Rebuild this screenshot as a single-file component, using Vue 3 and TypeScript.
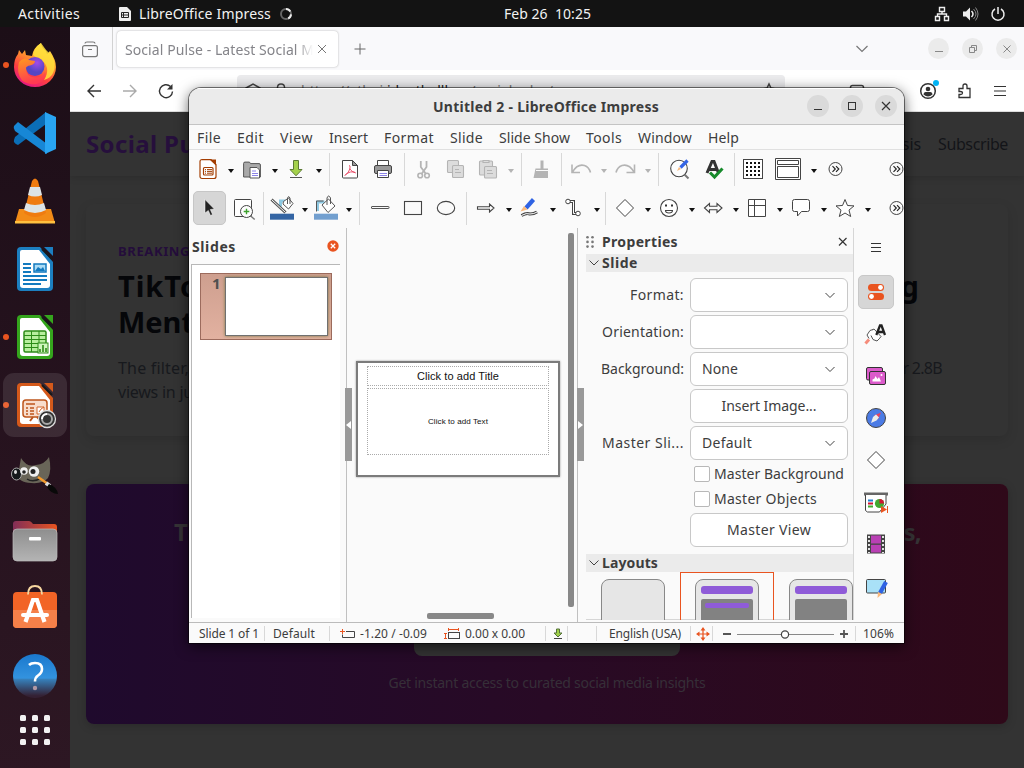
<script setup lang="ts">
import { nextTick } from 'vue'

// Spreads the letters of a label so that it fills the given width.
const vFit = {
  mounted(el: HTMLElement, binding: { value: number }) {
    nextTick(() => {
      el.style.letterSpacing = '0px'
      const range = document.createRange()
      range.selectNodeContents(el)
      const natural = range.getBoundingClientRect().width
      const count = (el.textContent || '').trim().length
      if (count > 1) el.style.letterSpacing = `${((binding.value - natural) / count).toFixed(3)}px`
    })
  },
}

const S = 'fill="none" stroke="#444" stroke-width="1.1"'
const G = 'fill="#dcdcdc" stroke="#b4b4b4" stroke-width="1.1"'

const icons: Record<string, string> = {
  impress: '<path d="M6 2.600h9l5 5v11.900a2 2 0 0 1-2 2H6a2 2 0 0 1-2-2v-15a2 2 0 0 1 2-2z" fill="#fff" stroke="#a33e03" stroke-width="1.200"/><path d="M13.500 2.600h6.500v6z" fill="#a33e03"/><rect x="7.500" y="10.500" width="9.500" height="7.500" rx="1" fill="none" stroke="#a33e03" stroke-width="1.200"/><path d="M9 12.600h1M11 12.600h5M9 14.400h1M11 14.400h5M9 16.200h1M11 16.200h5" stroke="#a33e03"/>',
  open: '<path d="M3.600 20V6.500q0-1.400 1.400-1.400h4.500l1 1.500h8.500q1.400 0 1.400 1.400V20z" fill="#a9a9a9" stroke="#555"/><path d="M10 10.500h7l2.500 2.500v8h-9.500z" fill="#fff" stroke="#555"/><path d="M12 14h4M12 16.500h6M12 18.500h6" stroke="#8b83e6"/>',
  save: '<path d="M9.500 3.500h5v9h3.500L12 18.800 6 12.500h3.500z" fill="#a4d14b" stroke="#5c7a35"/><path d="M6 20.500h12" stroke="#555"/>',
  pdf: '<path d="M4.500 3.500h10l5 5v11.500a1 1 0 0 1-1 1h-13a1 1 0 0 1-1-1z" fill="#fff" stroke="#444"/><path d="M14.500 3.500v5h5z" fill="#999" stroke="#444"/><path d="M11 8.500q1.500-.5 1 3-1 4-5 7 1-2.500 5.500-3.500 4-.8 5 .8-2.500.5-6-4.300" fill="none" stroke="#e8425f" stroke-width=".9"/>',
  print: '<path d="M6.500 9V3.500h11V9" fill="#fff" stroke="#444"/><rect x="3.500" y="8.500" width="17" height="8" rx="1.500" fill="#999" stroke="#444"/><path d="M6.500 13.500h11v7h-11z" fill="#fff" stroke="#444"/><path d="M8.500 16.500h7.500M8.500 18.500h7.500" stroke="#8b83e6"/>',
  cut: '<path d="M8.800 4v6l5.200 7M14.500 4v6l-5 7" stroke="#b4b4b4" stroke-width="1.800" fill="none"/><circle cx="8.200" cy="18.500" r="2.300" fill="none" stroke="#b4b4b4" stroke-width="1.600"/><circle cx="15" cy="18.500" r="2.300" fill="none" stroke="#b4b4b4" stroke-width="1.600"/>',
  copy: `<rect x="3.500" y="3.500" width="11" height="12" rx="1" ${G}/><rect x="8.500" y="8.500" width="11" height="12" rx="1" ${G}/><path d="M11 12.500h4M11 15.500h6" stroke="#b4b4b4"/>`,
  paste: `<rect x="3.500" y="4" width="13" height="14" rx="1" ${G}/><path d="M7 3.500h6v2h-6z" ${G}/><rect x="8.500" y="9.500" width="12" height="11.500" rx="1" ${G}/><path d="M11 13.500h5M11 16.500h6" stroke="#b4b4b4"/>`,
  brush: '<path d="M10.500 3.500h3v8h4.500v9.500h-14.500l2-9.500h5z" fill="#b4b4b4"/><path d="M6 13.500h12" stroke="#fafafa"/>',
  undo: '<path d="M3 7.500v8h8M3.500 15q5-8.500 12-6.500 4.500 1.500 6 7" fill="none" stroke="#b4b4b4" stroke-width="1.600"/>',
  redo: '<path d="M21.500 7.500v8h-8M21 15q-5-8.500-12-6.500-4.500 1.500-6 7" fill="none" stroke="#b4b4b4" stroke-width="1.600"/>',
  find: '<circle cx="12" cy="11.500" r="8.300" fill="#fdfdfd" stroke="#444" stroke-width="1.100"/><path d="M17.500 17.500l4 4" stroke="#777" stroke-width="2"/><path d="M13.500 10.500L20.500 3.500" stroke="#3465e5" stroke-width="3.200"/><path d="M10 14l2-4 2 2z" fill="#f9b97d"/>',
  spell: '<path d="M6 16L11 4.500h2L17.500 16M8.500 12.500h7" fill="none" stroke="#333" stroke-width="3"/><path d="M9 15.500l4.500 4.500 8-8.500" fill="none" stroke="#168a2b" stroke-width="3"/>',
  grid: `<rect x="2.500" y="2.500" width="19" height="19" fill="#fff" stroke="#444"/><path d="M5 6h15M5 10h15M5 14h15M5 18h15" stroke="#111" stroke-width="2" stroke-dasharray="2 2"/>`,
  display: `<path d="M-.5 1.500h25v21h-25zM1.500 3.500h21v4h-21zM1.500 9.500h21v11h-21z" fill="#fff" stroke="#444"/>`,
  more: '<circle cx="12.500" cy="12" r="6.500" fill="none" stroke="#444"/><path d="M9.500 9.200l2.800 2.800-2.800 2.800M13 9.200l2.800 2.800-2.800 2.800" fill="none" stroke="#222" stroke-width="1.150"/>',
  select: '<path d="M8 3.500V17l3.300-2.500 2.200 5 2-1-2.200-5 4-.5z" fill="#222" stroke="#fff" stroke-width=".5"/>',
  zoom: '<rect x="3.500" y="3.500" width="17" height="17" rx="1" fill="#fff" stroke="#444"/><circle cx="15.500" cy="15.500" r="6" fill="#fdfdfd" stroke="#444"/><path d="M15.500 12.700v5.600M12.700 15.500h5.600" stroke="#3da02d" stroke-width="1.400"/><path d="M19.700 20l4 3.500" stroke="#777" stroke-width="1.500"/>',
  lineColor: '<path d="M10.500 10.500V5h5" stroke="#8fc9e2" stroke-width="3" fill="none"/><path d="M13.500 5.500l5-3.500 4.500 5.500-4.500 5.500-5.500-5z" fill="#fff" stroke="#555"/><path d="M1.500 3.500l14 13" stroke="#555" stroke-width="3"/><path d="M1.500 3.500l14 13" stroke="#fff"/><path d="M17.500 8V2q1-3 2.500 0v6" stroke="#555" fill="none"/><rect x="0" y="17.700" width="24" height="6" fill="#3465a4"/>',
  fillColor: '<path d="M3.500 15V6h7" stroke="#8fc9e2" stroke-width="3" fill="none"/><path d="M2.500 15.500v-10.500h7" stroke="#555" fill="none"/><path d="M8 9l6.500-6 6.500 7-7 6.500z" fill="#fff" stroke="#555"/><path d="M13 9V2q1.500-4 3.500 0v6" stroke="#555" fill="none"/><rect x="0" y="17.700" width="24" height="6" fill="#729fcf"/>',
  line: `<rect x="3.500" y="10.500" width="17.500" height="2" rx=".5" fill="none" stroke="#555"/>`,
  rect: `<rect x="3.500" y="5.500" width="17" height="13" ${S}/>`,
  ellipse: `<ellipse cx="12" cy="12" rx="8.700" ry="6.600" ${S}/>`,
  arrow: `<path d="M3.500 10.700h12v-2.700l4.500 4-4.500 4v-2.700h-12z" ${S}/>`,
  pencil: '<path d="M8 12L15.500 3.500" stroke="#2f63e3" stroke-width="4.200"/><path d="M2.500 15.500l3.500-5.500 3.500 3.500z" fill="#f9b97d"/><path d="M3.500 19.500q5-3 8.500-1.500 4 0 7-2" fill="none" stroke="#444" stroke-width="3"/><path d="M3.500 19.500q5-3 8.500-1.500 4 0 7-2" fill="none" stroke="#fff"/>',
  connector: '<path d="M7 5.500h4.500v12h5" fill="none" stroke="#444" stroke-width="3"/><path d="M7 5.500h4.500v12h5" fill="none" stroke="#fff"/><circle cx="6" cy="5.500" r="2.300" fill="#fff" stroke="#444"/><circle cx="16" cy="17.500" r="2.300" fill="#fff" stroke="#444"/>',
  diamond: '<path d="M12 3.500l8.500 8.500-8.500 8.500-8.500-8.500z" fill="#fff" stroke="#444"/>',
  smiley: '<circle cx="12" cy="12" r="8.500" fill="#fff" stroke="#444" stroke-width="1.100"/><path d="M8 9.500h2M14 9.500h2" stroke="#333" stroke-width="1.800"/><path d="M8.500 14.500q0 2.500 3.500 2.500t3.500-2.500z" fill="none" stroke="#444" stroke-width="1.100"/>',
  leftRight: `<path d="M3.500 12l5-4.500v2.700h7.500v-2.700l5 4.500-5 4.500v-2.700h-7.500v2.700z" ${S}/>`,
  table: '<path d="M3.500 3.500h17v17h-17zM3.500 9.500h17M9.500 3.500v17" fill="#fff" stroke="#444"/>',
  callout: '<path d="M5.500 3.500h13q2 0 2 2v8q0 2-2 2h-6l-4 4.500v-4.500h-3q-2 0-2-2v-8q0-2 2-2z" fill="#fff" stroke="#444"/>',
  star: '<path d="M12 3.500l2.500 6 6.500.4-5 4.200 1.700 6.400-5.700-3.500-5.700 3.500 1.700-6.400-5-4.200 6.500-.4z" fill="#fff" stroke="#444"/>',
  menu: '<path d="M7 8.500h10M7 12.500h10M7 16.500h10" stroke="#333"/>',
  props: '<rect x="4" y="4" width="16" height="7" rx="3.500" fill="#e95420"/><rect x="4" y="13" width="16" height="7" rx="3.500" fill="#e95420"/><circle cx="16.500" cy="7.500" r="2.400" fill="#fff"/><circle cx="7.500" cy="16.500" r="2.400" fill="#fff"/>',
  styles: '<path d="M1.500 20.500l3.500-4" stroke="#f58c7b" stroke-width="3"/><path d="M5 15.500l-2-3.500 3-4.500 3-1 7 8.500-3 3-4-1.500-2-4" fill="#fff" stroke="#555"/><path d="M8 7l2-1 7 7.500-1.500 2" fill="#fff" stroke="#555"/><path d="M12.300 12L16 2.500h1.500L21 12M14 9h6" fill="none" stroke="#222" stroke-width="2.300"/>',
  gallery: '<rect x="2.500" y="3.500" width="16" height="12.500" rx="1.500" fill="#dc5bcb" stroke="#333"/><rect x="5.500" y="7.500" width="16" height="13" rx="1.500" fill="#dc5bcb" stroke="#333"/><path d="M8.500 17.500v-2l2-1 1-2.500 2 3 1.500-2 2 4.500z" fill="#fff"/><circle cx="17.500" cy="11" r="1" fill="#fff"/>',
  compass: '<circle cx="12" cy="12" r="9.500" fill="#4b7be5" stroke="#444"/><path d="M17 6.500l-7 3 4 4z" fill="#e8425f"/><path d="M7 17l2-6 3-2.500 3 3-2.500 3z" fill="#ececec"/>',
  present: '<path d="M0 3h24" stroke="#666" stroke-width="3"/><path d="M1.500 4v15.500l2 1.500h12l6.500-8V4" fill="#fff" stroke="#444"/><path d="M4 9.500h5" stroke="#1b80d4" stroke-width="2"/><path d="M4 12.500h5" stroke="#d01431" stroke-width="2"/><path d="M4 15.500h5" stroke="#41a82f" stroke-width="2"/><circle cx="15.500" cy="12.500" r="4.600" fill="#41a82f"/><path d="M15.500 12.500v-4.600a4.600 4.600 0 0 1 4.600 4.600z" fill="#d01431"/><path d="M17 15l6 3.500-6 3.500z" fill="#e95420"/><path d="M23.500 15v7" stroke="#e95420"/>',
  film: '<rect x="3" y="2.500" width="18" height="19" fill="#444"/><rect x="7" y="3.500" width="10" height="8" fill="#b940b4"/><rect x="7" y="12.800" width="10" height="7.700" fill="#b940b4"/><path d="M5 4v17M19 4v17" stroke="#fff" stroke-width="1.700" stroke-dasharray="2 2"/>',
  shapes: '<rect x="2.500" y="3.500" width="19" height="13.500" rx="1" fill="#a9e1f7" stroke="#444"/><path d="M22 6L16 17" stroke="#2f63e3" stroke-width="4.200"/><path d="M13.500 22l.5-6 4 2z" fill="#f9b97d"/>',
}

interface Tool { icon?: string; kind?: 'sep' | 'drop'; size: string; off?: boolean }
const t = (icon: string, size = 'n', off = false): Tool => ({ icon, size, off })
const sep = (size = 's10'): Tool => ({ kind: 'sep', size })
const drop = (off = false): Tool => ({ kind: 'drop', size: 'd', off })

const standardBar: Tool[] = [
  t('impress'), drop(), t('open'), drop(), t('save'), drop(), sep(), t('pdf'), t('print', 'w34'), sep('s8'),
  t('cut'), t('copy'), t('paste'), drop(true), sep(), t('brush'), sep('s7'), t('undo'), drop(true),
  t('redo'), drop(true), sep(), t('find'), t('spell', 'w36'), sep('s6'), t('grid'), t('display', 'w38'), drop(), t('more'), t('more', 'end'),
]
const drawBar: Tool[] = [
  t('select', 'pick'), t('zoom', 'w34'), sep('s6'), t('lineColor'), drop(), t('fillColor'), drop(), sep(),
  t('line'), t('rect', 'w33'), t('ellipse', 'w33'), sep('s8'), t('arrow'), drop(), t('pencil'), drop(), t('connector'), drop(), sep('s7'),
  t('diamond'), drop(), t('smiley'), drop(), t('leftRight'), drop(), t('table'), drop(), t('callout'), drop(), t('star'), drop(), t('more', 'end'),
]
const menus: [string, string, number][] = [
  ['File', 'm40', 24], ['Edit', 'm43', 27], ['View', 'm49', 33], ['Insert', 'm55', 39], ['Format', 'm66', 50],
  ['Slide', 'm49', 33], ['Slide Show', 'm87', 71], ['Tools', 'm52', 36], ['Window', 'm70', 54], ['Help', 'm50', 31],
]
const fields: { label: string; lw: number; value: string; vw: number; button?: boolean }[] = [
  { label: 'Format:', lw: 54, value: '', vw: 0 },
  { label: 'Orientation:', lw: 82, value: '', vw: 0 },
  { label: 'Background:', lw: 83, value: 'None', vw: 36 },
  { label: '', lw: 0, value: 'Insert Image...', vw: 95, button: true },
  { label: 'Master Sli...', lw: 82, value: 'Default', vw: 50 },
]
const deck = ['props', 'styles', 'gallery', 'compass', 'diamond', 'present', 'film', 'shapes']
const docs = ['writer', 'calc', 'slides']
</script>

<template>
  <div class="desktop">
    <header class="topbar">
      <span class="activities"><span v-fit="62">Activities</span></span>
      <span class="app">
        <svg width="12" height="14" viewBox="0 0 12 14"><path d="M1 0h7l4 4v9q0 1-1 1H1q-1 0-1-1V1q0-1 1-1z" fill="#eee" /><path d="M2.500 5.500h7v5h-7zM2.500 8h7M4.500 5.500v5" fill="none" stroke="#222" /></svg>
        <span v-fit="132">LibreOffice Impress</span>
        <svg class="spin" width="14" height="14" viewBox="0 0 14 14"><circle cx="7" cy="7" r="5" fill="none" stroke="#666" stroke-width="2" /><path d="M7 2a5 5 0 0 1 0 10" fill="none" stroke="#eee" stroke-width="2" stroke-dasharray="5 3" /></svg>
      </span>
      <span class="clock"><span v-fit="87">Feb 26&nbsp; 10:25</span></span>
      <span class="tray">
        <svg width="16" height="16" viewBox="0 0 16 16"><path d="M5.500 1.500h5v4h-5zM1.500 10.500h4v4h-4zM10.500 10.500h4v4h-4zM8 5.500v3M3.500 10.500v-2.500h9v2.500" fill="none" stroke="#eee" stroke-width="1.400" /></svg>
        <svg width="16" height="16" viewBox="0 0 16 16"><path d="M1 5.500h3l4-4v13l-4-4H1z" fill="#eee" /><path d="M9.500 5q3 3 0 6" stroke="#eee" stroke-width="1.500" fill="none" /><path d="M11.500 3q5 5 0 10M13.500 1.500q5 6.500 0 13" stroke="#888" fill="none" /></svg>
        <svg width="16" height="16" viewBox="0 0 16 16"><path d="M5 3a6 6 0 1 0 6 0M8 1v7" fill="none" stroke="#eee" stroke-width="1.500" /></svg>
      </span>
    </header>

    <div class="workspace">
      <nav class="dock">
        <div class="slot running">
          <svg width="44" height="44" viewBox="0 0 44 44">
            <defs>
              <linearGradient id="ff" x1=".8" y1="0" x2=".3" y2="1"><stop offset="0" stop-color="#fff44f" /><stop offset=".35" stop-color="#ffa52a" /><stop offset=".7" stop-color="#ff4040" /><stop offset="1" stop-color="#e31587" /></linearGradient>
              <radialGradient id="ffp" cx=".6" cy=".3"><stop offset="0" stop-color="#a44be8" /><stop offset="1" stop-color="#5346c4" /></radialGradient>
              <linearGradient id="ffs" x1="0" y1="0" x2=".3" y2="1"><stop offset="0" stop-color="#ff9a1f" /><stop offset="1" stop-color="#ff3a52" /></linearGradient>
            </defs>
            <path d="M28 0q0 4 5 8l1 3 3-3q6 9 6 16a21 20 0 0 1-42 0q0-8 4-13l1-4 3 4 3-4 1 5 6 1q1-8 9-13z" fill="url(#ff)" />
            <path d="M28 0q5 8 11 13 5 8 1 17-2 5-9 7 4-6 3-12-2-7-9-10-3-1-5-3 1-7 8-12z" fill="#ffdf3c" opacity=".85" />
            <circle cx="22" cy="23.500" r="9.500" fill="url(#ffp)" />
            <path d="M6 19q5-6 10-2l6 1q0 3-5 4.500-3.500.5-4 2.500 0 9 9 9.500 8 0 10-6 2 5-3 10-10 6-20-1-6-8-3-18.500z" fill="url(#ffs)" />
          </svg>
        </div>
        <div class="slot">
          <svg width="44" height="44" viewBox="0 0 44 44"><path d="M1 29q-1 3 4 5L33 13V1L2 26z" fill="#0b6eb7" /><path d="M1 15l4-4L34 33v10L2 20q-2-3-1-5z" fill="#1787d6" /><path d="M32 1l11 5v32l-11 5z" fill="#29a5f2" /></svg>
        </div>
        <div class="slot">
          <svg width="44" height="48" viewBox="0 0 44 48"><path d="M6 32h32l4 14H2z" fill="#f28b17" /><path d="M2 44h40v2.500H2z" fill="#ffc03f" /><path d="M19 4q3-5 6 0l8 32q-11 8-22 0z" fill="#ef7c11" /><path d="M17 10h10l2 8q-7 3-14 0zM13 26q9 4 18 0l2 7q-11 6-22 0z" fill="#dce4e7" /></svg>
        </div>
        <div v-for="d in docs" :key="d" class="slot" :class="[d, { running: d !== 'writer' }]">
          <svg width="38" height="46" viewBox="0 0 38 46">
            <path d="M5 1h19l13 15v25q0 4-4 4H5q-4 0-4-4V5q0-4 4-4z" class="shade" /><path d="M28 1h9v9z" class="shade" />
            <path d="M6 4h17l11 14v21q0 3-3 3H7q-3 0-3-3V6q0-2 2-2z" fill="#fff" />
            <path d="M26 3l10 10" stroke="#17191b" stroke-width="2" />
            <g v-if="d === 'writer'" stroke="#137abf" stroke-width="2"><path d="M7 18h8M7 22h8M7 26h8M7 30h24M7 34h24M7 38h18" /><rect x="18" y="18" width="12" height="8" fill="#abdcf6" stroke-width="1.500" /><path d="M19 25l3-4 3 2 2-2 2 4z" fill="#137abf" stroke="none" /></g>
            <g v-else-if="d === 'calc'"><rect x="8" y="17" width="22" height="21" rx="1.500" fill="#b7ee9d" stroke="#2c8b17" stroke-width="1.500" /><path d="M8 21.500h22M8 25.500h22M8 29.500h22M8 33.500h22M15.500 17v21M23 17v21" stroke="#2c8b17" /><rect x="22" y="29" width="10" height="10" fill="#cff5bd" stroke="#2c8b17" /><path d="M24 38v-3M27 38v-7M30 38v-4" stroke="#2c8b17" stroke-width="1.600" /></g>
            <g v-else><rect x="7" y="18" width="24" height="17" rx="3" fill="#f8ddcc" stroke="#bd551c" stroke-width="1.500" /><path d="M10 22h9M10 26h2M14 26h4M10 29h2M14 29h4M10 32h2M14 32h4" stroke="#bd551c" stroke-width="1.600" /><path d="M21 25h7v7h-7zM23 30l2-3 3-2" fill="#fff" stroke="#d4692f" /><path d="M17 35l-3 4M21 35l4 4" stroke="#bd551c" stroke-width="2" /></g>
          </svg>
          <svg v-if="d === 'slides'" class="busy" width="20" height="20" viewBox="0 0 20 20"><circle cx="10" cy="10" r="8.500" fill="#333" stroke="#ddd" stroke-width="1.300" /><circle cx="10" cy="10" r="5" fill="#333" stroke="#aaa" stroke-width="2" /><path d="M5 10a5 5 0 0 1 5-5" stroke="#fff" stroke-width="2" fill="none" /></svg>
        </div>
        <div class="slot gimp">
          <svg width="48" height="40" viewBox="0 0 48 40"><path d="M10 2q6 10 15 7 9-1 13-8 3 13-1 21-5 6-17 5-13-1-13-8z" fill="#696558" /><ellipse cx="5.500" cy="18" rx="5" ry="6" fill="#15191b" stroke="#aaa" /><ellipse cx="4.500" cy="16" rx="1.500" ry="2" fill="#ddd" /><circle cx="13" cy="15" r="3.800" fill="#eee" /><circle cx="23" cy="15.500" r="5.200" fill="#eee" /><circle cx="13" cy="16" r="1.800" fill="#222" /><circle cx="22" cy="15.500" r="2.500" fill="#222" /><path d="M16 23q6 4 14-1" stroke="#222" fill="none" stroke-width="1.500" /><path d="M27 21l10 7" stroke="#f49b2f" stroke-width="2.600" /><path d="M35 27l4 3" stroke="#ddd" stroke-width="4" /><path d="M38 28q8 3 9 10-7 0-11-7z" fill="#090909" /></svg>
        </div>
        <div class="slot">
          <svg width="46" height="42" viewBox="0 0 46 42"><defs><linearGradient id="fd"><stop offset="0" stop-color="#812e57" /><stop offset="1" stop-color="#e95420" /></linearGradient><linearGradient id="fb" x2="0" y2="1"><stop offset="0" stop-color="#8e8e8e" /><stop offset="1" stop-color="#b4b4b4" /></linearGradient></defs><path d="M1 14V4q0-3 3-3h13q2 0 4 3h21q3 0 3 3v7z" fill="url(#fd)" /><rect x="1" y="9" width="44" height="32" rx="4" fill="url(#fb)" stroke="#bcbcbc" stroke-width=".7" /><rect x="17" y="17" width="12" height="3.400" rx="1" fill="#fff" /></svg>
        </div>
        <div class="slot store">
          <svg width="46" height="44" viewBox="0 0 46 44"><rect x="1" y="7" width="44" height="36" rx="4" fill="#f26426" /><path d="M1 25h44v14q0 4-4 4H5q-4 0-4-4z" fill="#f58049" /><path d="M16 9.500q0-8.500 7-8.500t7 8.500" fill="none" stroke="#f7d7a0" stroke-width="1.800" /><path d="M13.500 37l7.500-22h4l7.500 22" fill="none" stroke="#fff" stroke-width="4.200" /><path d="M11 30h24" stroke="#fff" stroke-width="4" stroke-linecap="round" /></svg>
        </div>
        <div class="slot help">
          <svg width="46" height="46" viewBox="0 0 46 46"><defs><linearGradient id="hp" x2="0" y2="1"><stop offset="0" stop-color="#1a78cd" /><stop offset=".55" stop-color="#3393df" /><stop offset=".57" stop-color="#3681bc" /><stop offset=".95" stop-color="#342033" /></linearGradient></defs><circle cx="23" cy="24" r="22" fill="url(#hp)" /><path d="M17 13q2-2 6-2 7 0 7 6 0 4-4 6.500-3 2-3 6" fill="none" stroke="#fff" stroke-width="2.600" /><circle cx="23" cy="36" r="2.200" fill="#b198a4" /></svg>
        </div>
        <div class="apps"><i v-for="n in 9" :key="n" /></div>
      </nav>

      <section class="browser">
        <div class="tabs">
          <span class="history"><svg width="16" height="16" viewBox="0 0 16 16"><rect x=".6" y="4.600" width="14.800" height="11" rx="2" fill="none" stroke="#777" stroke-width="1.200" /><path d="M3 2.500q0-1.500 2-1.500h6q2 0 2 1.500M6 8.500h4" stroke="#777" fill="none" stroke-width="1.200" /></svg></span>
          <span class="tab"><span class="tabname"><span v-fit="197">Social Pulse - Latest Social Me</span></span><svg width="10" height="10" viewBox="0 0 10 10"><path d="M1 1l8 8M9 1L1 9" stroke="#777" /></svg></span>
          <svg class="plus" width="12" height="12" viewBox="0 0 12 12"><path d="M6 .5v11M.5 6h11" stroke="#666" /></svg>
          <svg class="chev" width="14" height="8" viewBox="0 0 14 8"><path d="M1.500 1l5.500 5.500L12.500 1" fill="none" stroke="#777" stroke-width="1.200" /></svg>
          <span class="winbtns"><b><svg width="10" height="10"><path d="M1 7.500h8" stroke="#888" /></svg></b><b><svg width="10" height="10"><path d="M1.500 3.500h5v5h-5zM3.500 3v-1.500h5v5h-1.500" fill="none" stroke="#888" /></svg></b><b><svg width="10" height="10"><path d="M1.500 1.500l7 7M8.500 1.500l-7 7" stroke="#888" /></svg></b></span>
        </div>
        <div class="navbar">
          <svg class="back" width="16" height="16" viewBox="0 0 16 16"><path d="M15 8H2M8 2L2 8l6 6" stroke="#333" fill="none" stroke-width="1.400" /></svg>
          <svg class="fwd" width="16" height="16" viewBox="0 0 16 16"><path d="M1 8h13M8 2l6 6-6 6" stroke="#aaa" fill="none" stroke-width="1.400" /></svg>
          <svg class="reload" width="16" height="16" viewBox="0 0 16 16"><path d="M12.500 3.500a6.500 6.500 0 1 0 2 5" stroke="#333" fill="none" stroke-width="1.400" /><path d="M14.500 1v5.500H9z" fill="#333" /></svg>
          <span class="url"><svg width="16" height="16"><path d="M1 5l7-4 7 4v5l-7 5-7-5z" stroke="#444" fill="none" stroke-width="1.500" /></svg><svg width="14" height="16"><path d="M3.500 8V4.500q0-3.500 3.500-3.500t3.500 3.500V8" stroke="#444" fill="none" stroke-width="1.500" /></svg><span>https://ethni.<strong>idnetballb</strong>.cc/socialpulse/</span><svg class="fav" width="16" height="16"><path d="M1 6l5-1 2-4 2 4 5 1-4 4v5l-3-2-4 2v-5z" stroke="#444" fill="none" stroke-width="1.500" /></svg></span>
          <svg class="pocket" width="16" height="16"><rect x="1.500" y="2.500" width="13" height="11" rx="2" fill="none" stroke="#444" stroke-width="1.500" /></svg>
          <svg class="acct" width="20" height="20" viewBox="0 0 20 20"><circle cx="9" cy="11" r="7.300" fill="none" stroke="#333" stroke-width="1.500" /><circle cx="9" cy="9" r="2.300" fill="#333" /><path d="M4.500 14.500q0-2.500 2-2.500h5q2 0 2 2.500-4.500 4-9 0z" fill="#333" /><circle cx="17" cy="3" r="3" fill="#00b3f4" /></svg>
          <svg class="puzzle" width="16" height="16" viewBox="0 0 16 16"><path d="M2 5.500h4V3q0-2 2-2t2 2v2.500h3v9H2v-3h1.500q2 0 2-1.500t-2-1.500H2z" stroke="#333" fill="none" stroke-width="1.300" /></svg>
          <svg class="burger" width="12" height="12"><path d="M0 1.500h12M0 6h12M0 10.500h12" stroke="#333" stroke-width="1.200" /></svg>
        </div>
        <div class="page">
          <div class="sitehead"><strong v-fit="144">Social Pulse</strong><span class="links"><span v-fit="60">Analysis</span><span v-fit="70">Subscribe</span></span></div>
          <article>
            <h6 v-fit="72">BREAKING</h6>
            <div class="split big"><span v-fit="100">TikTok</span><span v-fit="113">Raising</span></div>
            <div class="split big"><span v-fit="102">Mental</span></div>
            <div class="split para first"><span v-fit="71">The filter,</span><span v-fit="64">over 2.8B</span></div>
            <div class="split para"><span v-fit="88">views in just</span></div>
          </article>
          <div class="promo">
            <div class="headline"><span v-fit="33">To</span><span v-fit="80">trends,</span></div>
            <div class="cta" />
            <p><span v-fit="317">Get instant access to curated social media insights</span></p>
          </div>
        </div>
      </section>
    </div>

    <main class="window">
      <div class="title"><span v-fit="226">Untitled 2 - LibreOffice Impress</span>
        <div class="controls"><b><svg width="10" height="10"><path d="M1 8.500h8" stroke="#333" /></svg></b><b><svg width="10" height="10"><rect x="1.500" y="1.500" width="7" height="7" fill="none" stroke="#333" /></svg></b><b><svg width="10" height="10"><path d="M1 1l8 8M9 1l-8 8" stroke="#333" stroke-width="1.200" /></svg></b></div>
      </div>
      <div class="menubar"><span v-for="m in menus" :key="m[0]" :class="m[1]"><span v-fit="m[2]">{{ m[0] }}</span></span></div>
      <div v-for="(bar, i) in [standardBar, drawBar]" :key="i" class="toolbar" :class="'bar' + i">
        <span v-for="(x, j) in bar" :key="j" class="tool" :class="[x.size, x.kind, { off: x.off }]">
          <svg v-if="x.icon" width="24" height="24" viewBox="0 0 24 24" v-html="icons[x.icon]" />
        </span>
      </div>
      <div class="work">
        <section class="slidepanel">
          <div class="ptitle"><span v-fit="44">Slides</span><svg width="12" height="12"><circle cx="6" cy="6" r="5.700" fill="#e95420" /><path d="M3.800 3.800l4.400 4.400M8.200 3.800l-4.400 4.400" stroke="#fff" stroke-width="1.300" /></svg></div>
          <div class="list"><div class="thumb"><span>1</span><div /></div></div>
        </section>
        <div class="canvas">
          <div class="handle"><svg width="7" height="10"><path d="M6 1v8L1 5z" fill="#fff" /></svg></div>
          <div class="slide"><div class="ph one"><span v-fit="82">Click to add Title</span></div><div class="ph two"><span v-fit="60">Click to add Text</span></div></div>
          <div class="vscroll" /><div class="hscroll" />
        </div>
        <div class="sidebar">
          <div class="handle right"><svg width="7" height="10"><path d="M1 1v8l5-4z" fill="#fff" /></svg></div>
          <div class="props">
            <div class="phead"><svg width="9" height="14"><g fill="#777"><circle v-for="n in 6" :key="n" :cx="n % 2 ? 1.500 : 6.500" :cy="Math.ceil(n / 2) * 4.700 - 2.500" r="1.300" /></g></svg><span v-fit="76">Properties</span><svg class="x" width="10" height="10"><path d="M1 1l7.500 7.500M8.500 1L1 8.500" stroke="#333" stroke-width="1.200" /></svg></div>
            <div class="sect"><svg width="10" height="6"><path d="M.5.500L5 5l4.500-4.500" fill="none" stroke="#444" /></svg><span v-fit="36">Slide</span></div>
            <div class="form">
              <div v-for="(f, i) in fields" :key="i" class="row"><label><span v-if="f.label" v-fit="f.lw">{{ f.label }}</span></label><div class="box" :class="{ button: f.button }"><span v-if="f.value" v-fit="f.vw">{{ f.value }}</span><svg v-if="!f.button" width="12" height="7"><path d="M1.500 1l4.500 4.500L10.500 1" fill="none" stroke="#444" /></svg></div></div>
              <div class="check"><i /><span v-fit="130">Master Background</span></div>
              <div class="check"><i /><span v-fit="103">Master Objects</span></div>
              <div class="row"><label /><div class="box button"><span v-fit="84">Master View</span></div></div>
            </div>
            <div class="sect"><svg width="10" height="6"><path d="M.5.500L5 5l4.500-4.500" fill="none" stroke="#444" /></svg><span v-fit="56">Layouts</span></div>
            <div class="layouts"><div v-for="n in 3" :key="n" class="cell" :class="{ chosen: n === 2 }"><div class="mini"><template v-if="n > 1"><i /><em><u v-if="n === 2" /></em></template></div></div></div>
          </div>
          <div class="deck"><svg class="dmenu" width="24" height="24" v-html="icons.menu" /><div v-for="(d, i) in deck" :key="d" class="dt" :class="[{ active: i === 0 }, 'd-' + d]"><svg width="24" height="24" viewBox="0 0 24 24" v-html="icons[d]" /></div></div>
        </div>
      </div>
      <footer class="status">
        <span class="c1"><span v-fit="60">Slide 1 of 1</span></span><span class="c2"><span v-fit="42">Default</span></span>
        <span class="c3"><svg width="16" height="12"><path d="M2.500 1v5M0 3.500h5" stroke="#e95420" /><path d="M6 3.500h8.500v6H2.500v-3" fill="none" stroke="#444" /></svg><span v-fit="67">-1.20 / -0.09</span></span>
        <span class="c4"><svg width="17" height="12"><path d="M4 1.500h11M4.500 0v3M14.500 0v3M1.500 5v6M0 5.500h3M0 10.500h3" stroke="#e95420" /><rect x="4.500" y="4.500" width="11" height="6" fill="none" stroke="#444" /></svg><span v-fit="60">0.00 x 0.00</span></span>
        <span class="c5"><svg width="10" height="12"><path d="M3.500 1h3v4h2.500L5 9 1 5h2.500z" fill="#9fd048" stroke="#55713a" /><path d="M1 10.500h8" stroke="#444" /></svg></span>
        <span class="c6" /><span class="c7"><span v-fit="72">English (USA)</span></span>
        <span class="c8"><svg width="14" height="14" viewBox="0 0 16 16"><path d="M8 2v12M2 8h12" stroke="#e95420" stroke-width="1.400" /><path d="M8 0l2.800 4H5.200zM8 16l2.800-4H5.200zM0 8l4-2.800v5.600zM16 8l-4-2.800v5.600z" fill="#e95420" /></svg></span>
        <span class="c9"><svg width="124" height="12"><path d="M0 6h8M117 6h8M121 2v8" stroke="#555" stroke-width="1.800" /><path d="M14 6.500h97" stroke="#888" /><circle cx="62" cy="6.500" r="3.600" fill="#fff" stroke="#444" stroke-width="1.200" /></svg></span>
        <span class="c10"><span v-fit="31">106%</span></span>
      </footer>
    </main>
  </div>
</template>

<style>
body { overflow: hidden; }
</style>
<style scoped>
* { box-sizing: border-box; }
svg { display: block; flex: none; overflow: visible; }
.desktop { position: relative; width: 1024px; height: 768px; overflow: hidden; font-family: "Noto Sans", "Open Sans", sans-serif; font-size: 14px; color: #3d3d3d; white-space: nowrap; }
.topbar { height: 27px; background: #131313; color: #f2f2f2; display: grid; grid-template-columns: 118px 386px 1fr 90px; align-items: center; line-height: 26px; }
.activities { padding-left: 18px; }
.app { display: flex; align-items: center; gap: 8px; padding-left: 1px; }
.tray { display: flex; gap: 12px; align-items: center; }
.workspace { display: flex; height: 741px; }
.dock { width: 70px; flex: none; padding-top: 4px; background: linear-gradient(175deg, #1c0e17, #27131f 60%, #2d1723); }
.slot { height: 68px; display: flex; align-items: center; justify-content: center; position: relative; }
.slot:nth-child(9), .slot:nth-child(10) { height: 67.500px; }
.gimp { padding-top: 5px; }
.store { padding-bottom: 4px; }
.help { padding-bottom: 2px; }
.running::before { content: ""; position: absolute; left: 3px; top: 31px; width: 6px; height: 6px; border-radius: 50%; background: #e95420; }
.writer { color: #1c7fc0; } .calc { color: #35a51d; } .slides { color: #d4591b; }
.shade { fill: currentColor; }
.slides::after { content: ""; position: absolute; inset: 2px 3px; border-radius: 11px; background: rgba(255, 255, 255, .1); z-index: 0; }
.slides svg { z-index: 1; }
.busy { position: absolute; left: 37px; top: 38px; }
.apps { display: grid; grid-template-columns: repeat(3, 6px); gap: 6px; padding: 5px 0 0 20px; }
.apps i { height: 6px; border-radius: 1.500px; background: #f2f2f2; }

.browser { flex: 1; min-width: 0; }
.tabs { height: 43px; background: #f9f9fb; display: flex; align-items: center; }
.history { width: 43px; height: 43px; border-right: 1px solid #d2d2d2; display: flex; align-items: center; padding-left: 12px; }
.tab { margin-left: 4px; width: 221px; height: 36px; border-radius: 4px; background: #fff; box-shadow: 0 0 2px #aaa; display: flex; align-items: center; color: #85858a; padding-left: 8px; margin-top: 1px; }
.tabname { width: 188px; overflow: hidden; margin-right: 4px; mask-image: linear-gradient(90deg, #000 172px, transparent); }
.plus { margin-left: 16px; }
.chev { margin-left: 489px; }
.winbtns { display: flex; gap: 13px; margin-left: 59px; }
.winbtns b { width: 21px; height: 21px; border-radius: 50%; background: #ebebeb; display: grid; place-items: center; }
.navbar { height: 42px; background: #fff; border-bottom: 1px solid #ddd; display: flex; align-items: center; }
.back { margin-left: 16px; } .fwd { margin-left: 20px; } .reload { margin-left: 20px; }
.url { margin-left: 63px; width: 548px; height: 32px; border-radius: 4px; background: #ebebed; display: flex; align-items: center; padding-left: 8px; gap: 13px; color: #777; }
.url strong { color: #222; font-weight: 400; }
.fav { margin-left: auto; margin-right: 8px; }
.pocket { margin-left: 64px; } .acct { margin-left: 54px; margin-bottom: 1px; } .puzzle { margin-left: 18px; } .burger { margin-left: 21px; }
.page { height: 656px; background: #333; overflow: hidden; }
.sitehead { height: 64px; padding: 0 16px; display: flex; align-items: center; box-shadow: 0 2px 7px rgba(0, 0, 0, .13); color: #260f3c; font-size: 24px; }
.links { margin-left: auto; display: flex; gap: 17px; font-size: 16px; color: #131519; }
.sitehead strong { margin-top: -2px; }
article { margin: 28px 16px 0; height: 232px; border-radius: 8px; padding: 36px 32px 0; color: #050609; box-shadow: 0 4px 12px rgba(0, 0, 0, .12); }
h6 { margin: 0; width: max-content; font-size: 13px; line-height: 22px; color: #240d3b; }
.split { display: flex; justify-content: space-between; }
.big { font: bold 29px/36px "Noto Sans", sans-serif; padding-right: 56px; }
h6 + .big { padding-top: 6px; }
.para { font-size: 16px; line-height: 24px; color: #17191d; padding-right: 34px; }
.first { padding-top: 16px; }
.promo { margin: 48px 16px 0; height: 240px; border-radius: 8px; background: linear-gradient(90deg, #1f0a2d, #280a25 50%, #2f0919); padding-top: 30px; box-shadow: 0 2px 10px rgba(0, 0, 0, .2); }
.headline { display: flex; justify-content: space-between; padding: 0 87px 0 88px; font-size: 24px; line-height: 36px; height: 38px; font-weight: bold; color: #353335; }
.cta { width: 266px; height: 56px; margin: 48px auto 16px; border-radius: 8px; background: #333; }
p { margin: 0; text-align: center; font-size: 14px; line-height: 22px; color: #362f38; }

.window { position: absolute; left: 189px; top: 88px; width: 715px; height: 555px; background: #fafafa; border-radius: 12px 12px 0 0; box-shadow: 0 0 0 1px rgba(0, 0, 0, .5), 0 3px 14px rgba(0, 0, 0, .65); overflow: hidden; display: flex; flex-direction: column; }
.title { height: 37px; flex: none; background: #ebebeb; border-bottom: 1px solid #c4c4c4; border-top: 1px solid #fff; font-weight: bold; display: grid; place-items: center; padding-right: 1px; position: relative; }
.controls { position: absolute; right: 7px; top: 6px; display: flex; gap: 12px; }
.controls b { width: 22px; height: 22px; border-radius: 50%; background: #dadada; display: grid; place-items: center; }
.menubar { height: 25px; flex: none; border-bottom: 1px solid #e0e0e0; display: flex; align-items: center; padding: 1px 0 0 8px; line-height: 23px; }
.menubar > span { flex: none; }
.m40 { width: 40px; } .m43 { width: 43px; } .m49 { width: 49px; } .m55 { width: 55px; } .m66 { width: 66px; } .m87 { width: 87px; } .m52 { width: 52px; } .m70 { width: 70px; } .m50 { width: 50px; }
.toolbar { display: flex; align-items: center; padding-left: 3px; flex: none; }
.bar0 { height: 38px; }
.bar1 { height: 40px; padding-left: 4px; }
.tool { flex: none; height: 34px; display: grid; place-items: center; }
.n { width: 32px; } .w33 { width: 33px; } .w34 { width: 34px; } .w36 { width: 36px; } .w38 { width: 38px; } .d { width: 12px; }
.s10 { width: 10px; } .s8 { width: 8px; } .s7 { width: 7px; } .s6 { width: 6px; }
.sep::after { content: ""; width: 1px; height: 33px; background: #d8d8d8; }
.drop::after { content: ""; border: 3.500px solid transparent; border-top: 4px solid #111; border-bottom: 0; margin: 4px 0 0 1px; }
.drop.off::after { border-top-color: #b4b4b4; }
.pick { width: 33px; background: #d6d6d6; border: 1px solid #c6c6c6; border-radius: 5px; }
.pick svg { margin-left: -1px; }
.end { margin-left: auto; width: 16px; justify-content: center; }

.work { flex: none; height: 394px; display: flex; }
.slidepanel { width: 158px; border-right: 1px solid #c0c0c0; }
.ptitle { height: 36px; padding: 0 7px 0 3px; display: flex; align-items: center; justify-content: space-between; font-weight: bold; }
.list { margin-left: 2px; width: 149px; height: 354px; border: 1px solid #b8b8b8; border-width: 1px 0 0 1px; background: #fff; padding: 8px; }
.thumb { width: 132px; height: 67px; background: linear-gradient(#ce9f8f, #e2b1a0); border: 1px solid #9c6b5d; padding: 3px 3px 3px 11px; display: flex; justify-content: space-between; font: bold 15px/13px "Noto Sans", sans-serif; color: #4f4f4f; }
.thumb div { width: 103px; height: 59px; background: #fff; border: 1px solid #707070; box-shadow: 0 0 3px #774; }
.canvas { width: 230px; position: relative; padding: 133px 0 0 9px; }
.handle { position: absolute; left: -2px; top: 160px; width: 7px; height: 73px; background: #999; display: grid; place-items: center; }
.slide { width: 204px; height: 116px; border: 2px solid #7b7b7b; background: #fff; box-shadow: 0 0 2px #999; padding: 3px 9px; font-family: "Liberation Sans", sans-serif; color: #111; }
.ph { width: 182px; border: 1px dotted #aaa; display: grid; place-items: center; }
.one { height: 20px; font-size: 11px; } .two { height: 67px; margin-top: 2px; font-size: 8px; }
.vscroll { position: absolute; left: 221px; top: 5px; width: 6px; height: 374px; border-radius: 2px; background: #888; }
.hscroll { position: absolute; left: 80px; top: 385px; width: 67px; height: 6px; border-radius: 2px; background: #888; }
.sidebar { width: 327px; border-left: 1px solid #c0c0c0; position: relative; display: flex; }
.handle.right { left: -1px; }
.props { width: 276px; height: 392px; border-right: 1px solid #d6d6d6; padding-left: 8px; overflow: hidden; }
.phead { height: 26px; display: flex; align-items: center; font-weight: bold; padding-top: 1px; }
.phead span { margin-left: 7px; } .phead .x { margin-left: auto; margin-right: 5px; }
.sect { height: 18px; line-height: 18px; background: #ebebeb; display: flex; align-items: center; font-weight: bold; padding-left: 3px; gap: 3px; }
.form { padding-top: 6px; height: 282px; }
.row { display: flex; height: 34px; margin-bottom: 3px; align-items: center; }
label { width: 98px; text-align: right; margin-right: 6px; padding-bottom: 2px; }
.box { width: 158px; height: 34px; border: 1px solid #c8c8c8; border-radius: 6px; background: #fff; display: flex; align-items: center; padding: 0 11px 2px; }
.box svg { margin: 2px 0 0 auto; } .button { justify-content: center; }
.check { display: flex; height: 25px; align-items: center; padding: 0 0 3px 108px; gap: 5px; }
.check span { margin-top: -2px; }
.check i { width: 16px; height: 16px; border: 1px solid #b8b8b8; border-radius: 2px; background: #fff; margin-right: -1px; }
.layouts { display: flex; height: 48px; border-bottom: 1px solid #d6d6d6; }
.cell { width: 94px; height: 90px; flex: none; padding: 7px 0 0 15px; }
.chosen { border: 1px solid #e95420; border-width: 1px 1px 0; padding: 6px 0 0 14px; }
.mini { width: 64px; height: 64px; border: 1px solid #888; border-radius: 8px; background: #e6e6e6; padding: 6px 5px; }
.mini i { display: block; height: 8px; border-radius: 3px; background: #8f5bd8; }
.mini em { display: block; margin-top: 5px; height: 40px; border-radius: 2px; background: #828282; padding: 4px; }
.mini u { display: block; height: 5px; border-radius: 2px; background: #8f5bd8; }
.deck { padding: 7px 0 0 4px; }
.dmenu { margin: 0 0 16px 6px; }
.dt { width: 36px; height: 34px; margin-bottom: 8px; display: grid; place-items: center; border-radius: 5px; border: 1px solid transparent; }
.d-styles { padding-top: 2px; } .d-present { padding-top: 2px; } .d-shapes { padding-top: 4px; }
.active { background: #d6d6d6; border-color: #c8c8c8; }
.status { height: 21px; border-top: 1px solid #bbb; display: flex; align-items: center; font-size: 12px; line-height: 20px; padding-top: 1px; }
.status > span { height: 15px; display: flex; align-items: center; border-right: 1px solid #d8d8d8; flex: none; }
.status .c1 { width: 76px; padding-left: 10px; } .status .c2 { width: 65px; padding-left: 8px; }
.status .c3 { width: 113px; border: 0; padding-left: 10px; gap: 4px; } .status .c4 { width: 103px; padding-left: 1px; gap: 4px; }
.status .c5 { width: 22px; padding-left: 7px; } .status .c6 { width: 29px; }
.status .c7 { width: 94px; padding-left: 12px; } .status .c8 { width: 22px; padding-left: 5px; } .status .c9 { width: 143px; padding-left: 10px; } .status .c10 { border: 0; padding-left: 7px; }
</style>
